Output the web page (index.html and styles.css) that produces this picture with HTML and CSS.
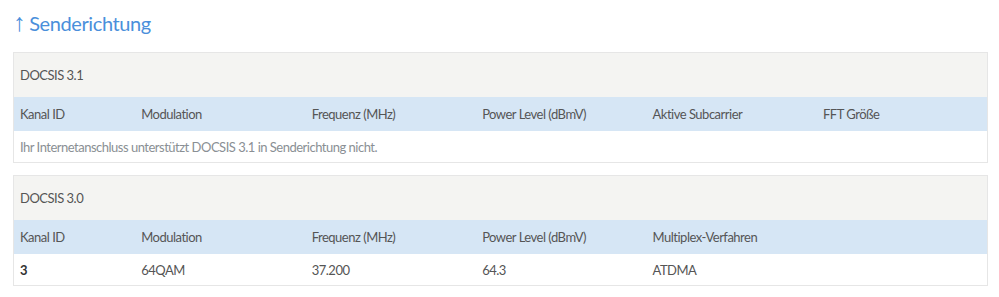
FILE: index.html
```html
<!DOCTYPE html>
<html lang="de">
<head>
<meta charset="utf-8">
<link rel="stylesheet" href="styles.css">
</head>
<body>
<h2 class="title"><span class="arrow">↑</span> Senderichtung</h2>
<table class="tbl">
  <colgroup><col class="c1"><col class="cn"><col class="cn"><col class="cn"><col class="cn"><col class="cn"></colgroup>
  <tr class="cap"><td colspan="6">DOCSIS 3.1</td></tr>
  <tr class="head"><th>Kanal ID</th><th>Modulation</th><th>Frequenz (MHz)</th><th>Power Level (dBmV)</th><th>Aktive Subcarrier</th><th>FFT Größe</th></tr>
  <tr class="msg"><td colspan="6">Ihr Internetanschluss unterstützt DOCSIS 3.1 in Senderichtung nicht.</td></tr>
</table>
<table class="tbl">
  <colgroup><col class="c1"><col class="cn"><col class="cn"><col class="cn"><col class="cn"><col class="cn"></colgroup>
  <tr class="cap"><td colspan="6">DOCSIS 3.0</td></tr>
  <tr class="head"><th>Kanal ID</th><th>Modulation</th><th>Frequenz (MHz)</th><th>Power Level (dBmV)</th><th>Multiplex-Verfahren</th><th></th></tr>
  <tr class="row"><td class="id">3</td><td>64QAM</td><td>37.200</td><td>64.3</td><td>ATDMA</td><td></td></tr>
</table>
</body>
</html>
```
FILE: styles.css
```css
html, body { margin: 0; padding: 0; background: #fff; }
body {
  padding: 12px 12px 0 13px;
  font-family: Lato, "Open Sans", "Liberation Sans", sans-serif;
  font-size: 13px;
  letter-spacing: -0.5px;
  color: #555;
}
.title {
  margin: 0 0 17px 0;
  font-weight: 400;
  font-size: 20px;
  line-height: 23px;
  letter-spacing: -0.4px;
  color: #4a8fdb;
}
.arrow {
  font-family: "Liberation Sans", sans-serif;
  font-size: 25px;
  line-height: 0;
  letter-spacing: -1px;
}
.tbl {
  width: 975px;
  border-collapse: collapse;
  table-layout: fixed;
  border: 1px solid #e6e6e6;
  margin-bottom: 12px;
}
.c1 { width: 12.5%; }
.cn { width: 17.5%; }
.tbl td, .tbl th {
  padding: 0 0 0 6px;
  text-align: left;
  font-weight: 400;
  white-space: nowrap;
}
.cap td { background: #f4f4f2; height: 44px; }
.head th { background: #d6e6f5; height: 34px; }
.msg td { height: 31px; color: #8a8f94; }
.row td { height: 31px; }
.row td.id { font-weight: 700; color: #333; }
```
